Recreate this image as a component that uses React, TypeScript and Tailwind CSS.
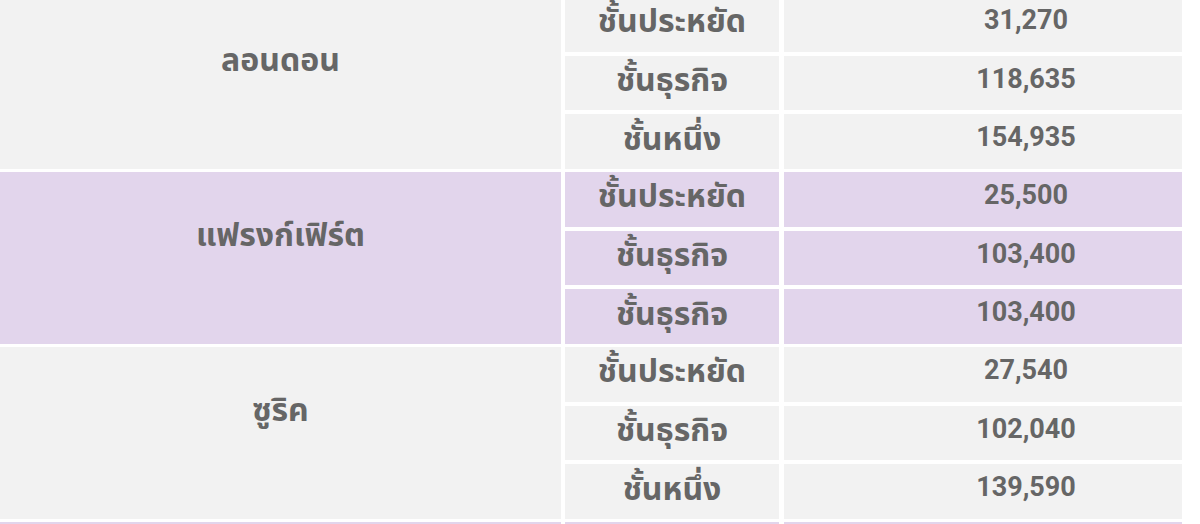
import React from 'react';

type Fare = { cls: string; price: string };
type City = { name: string; fares: Fare[]; tone: 'gray' | 'purple' };

const cities: City[] = [
  {
    name: 'ลอนดอน',
    tone: 'gray',
    fares: [
      { cls: 'ชั้นประหยัด', price: '31,270' },
      { cls: 'ชั้นธุรกิจ', price: '118,635' },
      { cls: 'ชั้นหนึ่ง', price: '154,935' },
    ],
  },
  {
    name: 'แฟรงก์เฟิร์ต',
    tone: 'purple',
    fares: [
      { cls: 'ชั้นประหยัด', price: '25,500' },
      { cls: 'ชั้นธุรกิจ', price: '103,400' },
      { cls: 'ชั้นธุรกิจ', price: '103,400' },
    ],
  },
  {
    name: 'ซูริค',
    tone: 'gray',
    fares: [
      { cls: 'ชั้นประหยัด', price: '27,540' },
      { cls: 'ชั้นธุรกิจ', price: '102,040' },
      { cls: 'ชั้นหนึ่ง', price: '139,590' },
    ],
  },
];

function CityGroup({ city }: { city: City }) {
  const bg = city.tone === 'purple' ? 'bg-[#e2d5ec]' : 'bg-[#f2f2f2]';
  return (
    <div className="flex h-[172px] shrink-0">
      {/* City name */}
      <div className={`w-[561px] shrink-0 flex items-center justify-center pb-[46px] ${bg}`}>
        <span className="text-[32px] leading-none font-bold">{city.name}</span>
      </div>

      {/* Fare rows */}
      <div className="ml-[4px] flex flex-col gap-[4px] w-[617px]">
        {city.fares.map((f, i) => (
          <div key={i} className="flex flex-1 min-h-0">
            <div className={`w-[214px] flex items-center justify-center pb-[6px] ${bg}`}>
              <span className="text-[32px] leading-none font-bold">{f.cls}</span>
            </div>
            <div className={`ml-[5px] flex-1 flex items-center justify-center pl-[86px] pb-[8px] ${bg}`}>
              <span className="text-[27px] leading-none font-bold">{f.price}</span>
            </div>
          </div>
        ))}
      </div>
    </div>
  );
}

// next group peeks in at the bottom edge, no readable text
function TrailingGroup() {
  return (
    <div className="flex h-[172px] shrink-0">
      <div className="w-[561px] shrink-0 bg-[#e2d5ec]" />
      <div className="ml-[4px] flex w-[617px]">
        <div className="w-[214px] bg-[#e2d5ec]" />
        <div className="ml-[5px] flex-1 bg-[#e2d5ec]" />
      </div>
    </div>
  );
}

export default function App() {
  return (
    <div
      className="w-[1200px] h-[524px] overflow-hidden bg-white text-[#666666]"
      style={{ fontFamily: 'Roboto, "Noto Sans Thai", "Noto Sans", sans-serif' }}
    >
      <div className="flex flex-col gap-[3px] -mt-[3px]">
        {cities.map((c, i) => (
          <CityGroup key={i} city={c} />
        ))}
        <TrailingGroup />
      </div>
    </div>
  );
}
